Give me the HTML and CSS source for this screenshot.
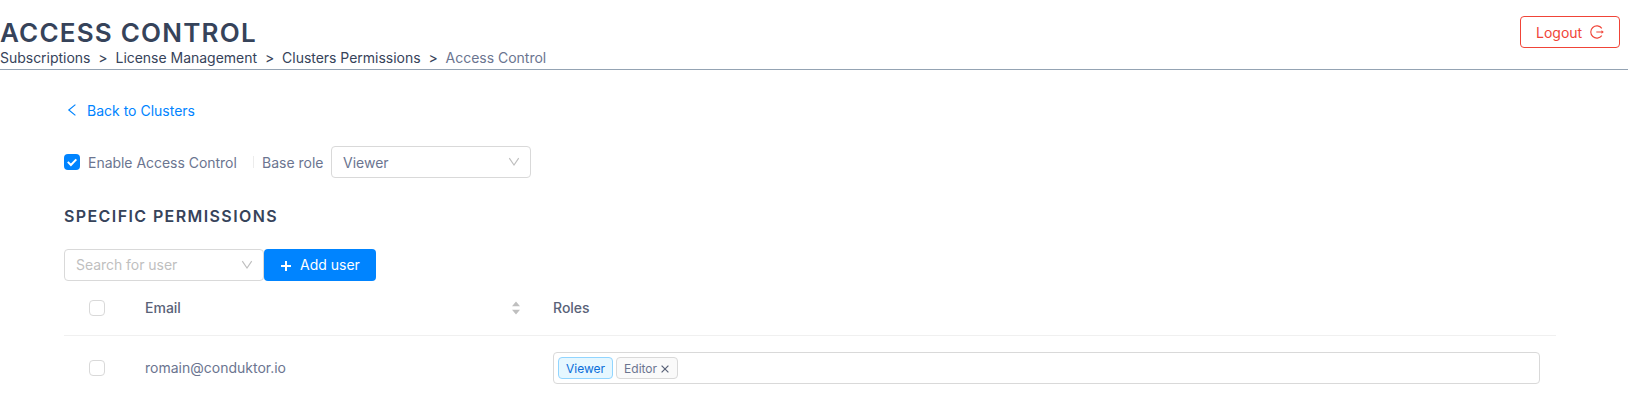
FILE: index.html
```html
<!DOCTYPE html>
<html lang="en">
<head>
<meta charset="utf-8">
<title>Access Control</title>
<link rel="stylesheet" href="styles.css">
</head>
<body>
<header class="header">
  <div class="header-main">
    <h1 class="title">ACCESS CONTROL</h1>
    <nav class="breadcrumb"><a>Subscriptions</a><span class="sep">&gt;</span><a>License Management</a><span class="sep">&gt;</span><a>Clusters Permissions</a><span class="sep">&gt;</span><span class="current">Access Control</span></nav>
  </div>
  <button class="btn btn-logout"><span>Logout</span>
    <svg class="icon-logout" viewBox="0 0 14 14" fill="none" stroke="currentColor" stroke-width="1.15"><path d="M11.8 3.4A6.1 6.1 0 1 0 11.8 10.6M6.3 7H12.5"/><path d="M11.5 5.2L13.8 7L11.5 8.8Z" fill="currentColor" stroke="none"/></svg>
  </button>
</header>
<main class="content">
  <a class="back"><svg class="icon-back" viewBox="0 0 14 14" fill="none" stroke="currentColor" stroke-width="1.2"><path d="M11.4 1.6L4.8 7L11.4 12.4"/></svg>Back to Clusters</a>
  <div class="controls">
    <span class="checkbox checked"><svg viewBox="0 0 16 16" fill="none" stroke="#fff" stroke-width="2"><path d="M3.8 7.9L6.9 11L12.3 5.4"/></svg></span>
    <span class="check-label">Enable Access Control</span>
    <span class="divider"></span>
    <span class="base-label">Base role</span>
    <div class="select"><span class="value">Viewer</span><svg class="chevron" viewBox="0 0 12 12" fill="none" stroke="currentColor" stroke-width="1.15"><path d="M1.3 2.2L6 9L10.7 2.2"/></svg></div>
  </div>
  <h2 class="subtitle">SPECIFIC PERMISSIONS</h2>
  <div class="add-row">
    <div class="select placeholder">Search for user<svg class="chevron" viewBox="0 0 12 12" fill="none" stroke="currentColor" stroke-width="1.15"><path d="M1.3 2.2L6 9L10.7 2.2"/></svg></div>
    <button class="btn btn-add"><svg class="icon-plus" viewBox="0 0 10 10" stroke="currentColor" stroke-width="2"><path d="M5 0V10M0 5H10"/></svg>Add user</button>
  </div>
  <div class="table">
    <div class="row head">
      <div class="cell-check"><span class="checkbox"></span></div>
      <div class="cell-email">Email<svg class="sorter" viewBox="0 0 8 14" fill="currentColor"><path d="M4 .5L8 5.3H0ZM4 13.5L8 8.7H0Z"/></svg></div>
      <div class="cell-roles">Roles</div>
    </div>
    <div class="row body">
      <div class="cell-check"><span class="checkbox"></span></div>
      <div class="cell-email">romain@conduktor.io</div>
      <div class="cell-roles"><div class="multi"><span class="tag tag-blue">Viewer</span><span class="tag">Editor<svg class="icon-close" viewBox="0 0 8 8" fill="none" stroke="currentColor" stroke-width="1.2"><path d="M.6 .6L7.4 7.4M7.4 .6L.6 7.4"/></svg></span></div></div>
    </div>
  </div>
</main>
</body>
</html>
```
FILE: styles.css
```css
* { box-sizing: border-box; }
body {
  margin: 0;
  height: 400px;
  overflow: hidden;
  background: #fff;
  color: #6b7590;
  font: 14px/22px Inter, sans-serif;
  font-optical-sizing: none;
}
svg { display: block; flex: none; }
.header {
  display: flex;
  justify-content: space-between;
  height: 70px;
  padding: 16px 8px 0 0;
  border-bottom: 1px solid #94a3b3;
}
.title {
  margin: 0;
  color: #36435a;
  font-size: 26px;
  line-height: 34px;
  font-weight: 600;
  letter-spacing: 1.2px;
}
.breadcrumb { display: flex; margin-top: -3px; color: #36435a; white-space: nowrap; letter-spacing: -0.02px; }
.sep { margin: 0 7.9px; }
.current { color: #6b7590; }
.btn {
  display: flex;
  align-items: center;
  height: 32px;
  border-radius: 4px;
  font: 14px/22px Inter, sans-serif;
  white-space: nowrap;
}
.btn-logout {
  justify-content: space-between;
  width: 100px;
  padding: 0 15px;
  border: 1px solid #f04438;
  background: #fff;
  color: #f04438;
}
.btn-logout span, .check-label, .base-label, .value { padding-top: 1px; }
.icon-logout { width: 14px; height: 14px; margin-top: -1px; }
.content { padding: 30px 72px 0 64px; }
.back { display: flex; align-items: center; height: 22px; color: #0084ff; }
.icon-back { width: 14px; height: 14px; margin: -2px 9px 0 0; }
.controls { display: flex; align-items: center; height: 32px; margin-top: 24px; }
.checkbox {
  display: block;
  flex: none;
  width: 16px;
  height: 16px;
  border: 1px solid #d9d9d9;
  border-radius: 4px;
}
.checked { border: 0; background: #0084ff; }
.check-label { width: 156px; margin-left: 8px; white-space: nowrap; letter-spacing: -0.03px; }
.divider { width: 1px; height: 12px; margin: 0 8px 0 9px; background: #ececec; }
.base-label { width: 69px; white-space: nowrap; }
.select {
  display: flex;
  align-items: center;
  justify-content: space-between;
  width: 200px;
  height: 32px;
  padding: 0 10px 0 11px;
  border: 1px solid #d9d9d9;
  border-radius: 4px;
}
.chevron { width: 12px; height: 12px; color: #bfbfbf; }
.placeholder { color: #bfbfbf; letter-spacing: -0.04px; }
.subtitle {
  margin: 26px 0 0;
  color: #36435a;
  font-size: 16px;
  line-height: 24px;
  font-weight: 600;
  letter-spacing: 1.4px;
}
.add-row { display: flex; margin-top: 21px; }
.btn-add { width: 112px; padding: 0 16px 0 17px; border: 0; background: #0084ff; color: #fff; }
.icon-plus { width: 10px; height: 10px; margin: 2px 9px 0 0; }
.row { display: grid; grid-template-columns: 65px 408px 1fr; align-items: center; }
.head { height: 55px; border-bottom: 1px solid #f0f0f0; font-weight: 500; color: #596278; }
.body { height: 64px; }
.cell-check { padding-left: 25px; }
.cell-email { display: flex; align-items: center; justify-content: space-between; padding: 0 17.5px 0 16px; }
.cell-roles { padding: 0 16px; }
.sorter { width: 8px; height: 14px; color: #bfbfbf; }
.multi {
  display: flex;
  align-items: center;
  gap: 3px;
  height: 32px;
  padding-left: 4px;
  border: 1px solid #d9d9d9;
  border-radius: 4px;
}
.tag {
  display: flex;
  align-items: center;
  height: 22px;
  padding: 1px 7px 0;
  border: 1px solid #d9d9d9;
  border-radius: 4px;
  background: #fafafa;
  font-size: 12px;
}
.tag-blue { border-color: #91d5ff; background: #e6f7ff; color: #096dd9; }
.icon-close { width: 8px; height: 8px; margin: 0 1px 0 4px; color: #596278; }
```
